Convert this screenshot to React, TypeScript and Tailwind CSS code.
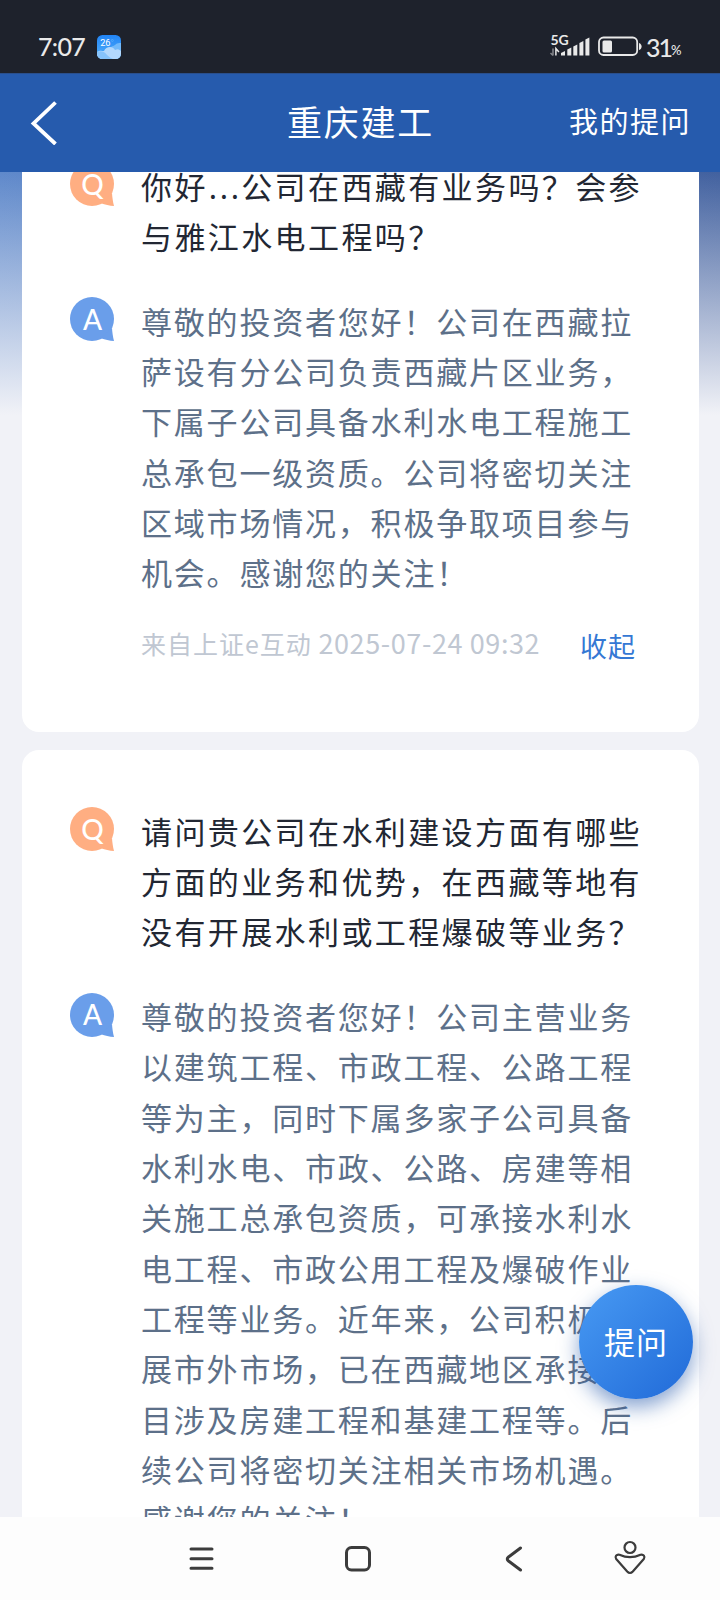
import React from "react"

interface QaItem {
    question: string[]
    answer: string[]
    source?: string
}

const items: QaItem[] = [
    {
        question: ["你好…公司在西藏有业务吗？会参", "与雅江水电工程吗？"],
        answer: [
            "尊敬的投资者您好！公司在西藏拉",
            "萨设有分公司负责西藏片区业务，",
            "下属子公司具备水利水电工程施工",
            "总承包一级资质。公司将密切关注",
            "区域市场情况，积极争取项目参与",
            "机会。感谢您的关注！",
        ],
        source: "2025-07-24 09:32",
    },
    {
        question: [
            "请问贵公司在水利建设方面有哪些",
            "方面的业务和优势，在西藏等地有",
            "没有开展水利或工程爆破等业务？",
        ],
        answer: [
            "尊敬的投资者您好！公司主营业务",
            "以建筑工程、市政工程、公路工程",
            "等为主，同时下属多家子公司具备",
            "水利水电、市政、公路、房建等相",
            "关施工总承包资质，可承接水利水",
            "电工程、市政公用工程及爆破作业",
            "工程等业务。近年来，公司积极拓",
            "展市外市场，已在西藏地区承接项",
            "目涉及房建工程和基建工程等。后",
            "续公司将密切关注相关市场机遇。",
            "感谢您的关注！",
        ],
    },
]

// the CJK ellipsis sits mid-line, so it is set as spaced full stops
const Lines: React.FC<{ lines: string[] }> = ({ lines }) => (
    <>
        {lines.map(line => (
            <span key={line} className="block h-[50.3px] whitespace-nowrap">
                {line.split(/(…)/).map((part, i) =>
                    part === "…" ? (
                        <span key={i} className="inline-block w-[33.4px] pl-px font-['Noto_Sans'] text-[31px] leading-none tracking-[2.7px]">
                            ...
                        </span>
                    ) : (
                        part
                    )
                )}
            </span>
        ))}
    </>
)

const Badge: React.FC<{ letter: "Q" | "A" }> = ({ letter }) => (
    <div className="relative h-11 w-11 shrink-0">
        <svg
            viewBox="0 0 44 44"
            className={letter === "Q" ? "h-11 w-11 text-[#ffae82]" : "h-11 w-11 text-[#6a9eea]"}
            fill="currentColor"
        >
            <circle cx="22" cy="22" r="22" />
            <path d="M42 31c.2 4 .9 8.500 2 13-4.500-.4-9-1.300-13-2.800z" />
        </svg>
        <span className="absolute inset-0 flex items-center justify-center pb-px pl-px font-['Lato'] text-[28px] leading-none font-medium text-white">
            {letter}
        </span>
    </div>
)

const StatusBar: React.FC = () => (
    <div className="flex h-[73px] shrink-0 items-end justify-between bg-[#1e222c] pr-[37px] pb-[11px] pl-[38px] font-['Lato'] text-[#e9e9e9]">
        <div className="flex items-center gap-3 pb-0.5">
            <span className="w-[47px] text-[25px] leading-[27px] font-medium tracking-[-0.7px] whitespace-nowrap">7:07</span>
            <svg viewBox="0 0 24 24" className="h-6 w-6">
                <defs>
                    <linearGradient id="sky" x1="0" y1="0" x2="0" y2="1">
                        <stop offset="0" stopColor="#2184f5" />
                        <stop offset="1" stopColor="#55b2fb" />
                    </linearGradient>
                    <clipPath id="tile">
                        <rect width="24" height="24" rx="5.500" />
                    </clipPath>
                </defs>
                <g clipPath="url(#tile)">
                    <rect width="24" height="24" fill="url(#sky)" />
                    <path d="M12 14c2-3 5-3 6-4 2-2 4-2 6-2v16H8z" fill="#72b9fa" />
                    <path d="M0 17c3-2 5-1 7-1 2-5 9-5 11-1 3-2 5 0 6 1v8H0z" fill="#b3d8fd" />
                    <path d="M0 17c4-2 8 0 10 3 2 2 4 3 6 4H0z" fill="#86c3fc" />
                </g>
                <text x="3.200" y="11" fontSize="9.200" fill="#fff" fontFamily="Roboto">26</text>
                <circle cx="15.300" cy="5.500" r="1" fill="none" stroke="#5fb0fb" strokeWidth=".7" />
            </svg>
        </div>

        <div className="flex items-center">
            <svg viewBox="0 0 96 24" className="mr-0.5 h-6 w-24 overflow-visible">
                <text x="1.500" y="10" fontSize="14" fontWeight="700" fill="#e9e9e9" fontFamily="Lato">5G</text>
                <path d="M4 13.500v7M4 20.500l-2.500-2.500" stroke="#85878c" strokeWidth="1.500" fill="none" />
                <path d="M6.900 20.500v-7l3 3.500" stroke="#e9e9e9" strokeWidth="1.500" fill="none" />
                <g fill="#e9e9e9">
                    <path d="M12 18l4-2v4.500h-4z" />
                    <path d="M18.300 14.500l4-2v8h-4z" />
                    <path d="M24.300 11.500l4-2v11h-4z" />
                    <path d="M30.400 8l4-2v14.500h-4z" />
                    <path d="M36.400 4.500l4-2v18h-4z" />
                    <rect x="53.500" y="5.500" width="9.500" height="12" rx="1.500" />
                    <path d="M90 8c3.500 1 3.500 6 0 7z" />
                </g>
                <rect x="50" y="2.500" width="38.200" height="17.500" rx="4.500" fill="none" stroke="#e9e9e9" strokeWidth="1.800" />
            </svg>
            <span className="w-6 -translate-x-px text-[25px] leading-6 font-medium tracking-[-2px]">31</span>
            <span className="w-3 pt-1.5 text-[13px] leading-6 font-medium">%</span>
        </div>
    </div>
)

const App: React.FC = () => {
    return (
        <div className="flex h-[1600px] w-[720px] flex-col overflow-hidden bg-[#f1f2f7] font-['Noto_Sans_CJK_SC',sans-serif]">
            <StatusBar />

            {/* HEADER */}
            <header className="grid h-[99px] shrink-0 grid-cols-[1fr_auto_1fr] items-center border-t border-[#2a4f8c] bg-[#265bad] pr-[29px] pl-[30px] text-white">
                <svg viewBox="0 0 28 44" className="h-11 w-7" fill="none" stroke="currentColor" strokeWidth="3.800">
                    <path d="M25.500 1.500L3.500 22.500l22 20.500" />
                </svg>
                <h1 className="pb-[5px] text-[35px] leading-none tracking-[1.8px]">重庆建工</h1>
                <button className="justify-self-end pb-[5px] text-[29px] leading-none tracking-[1.5px]">我的提问</button>
            </header>

            {/* Q&A LIST */}
            <main className="flex-1 overflow-hidden bg-[linear-gradient(to_bottom,transparent,#f1f2f7_243px),linear-gradient(to_right,#5f89cb,#42619f)] pr-[21px] pl-[22px]">
                <div className="-mt-[67px] flex flex-col gap-[18px]">
                    {items.map(item => (
                        <article key={item.question[0]} className="rounded-[17px] bg-white px-12 pt-[57px] last:pb-12">
                            <div className="flex gap-[27px]">
                                <Badge letter="Q" />
                                <p className="-mt-[1.5px] mb-[1.5px] text-[31px] leading-[50.3px] tracking-[2.4px] text-[#222733]">
                                    <Lines lines={item.question} />
                                </p>
                            </div>
                            <div className="mt-[34.7px] flex gap-[27px]">
                                <Badge letter="A" />
                                <p className="-mt-[1.5px] mb-[1.5px] text-[31px] leading-[50.3px] tracking-[1.8px] text-[#5d7089]">
                                    <Lines lines={item.answer} />
                                </p>
                            </div>
                            {item.source && (
                                <div className="flex h-[133px] items-start pt-6 pl-[71px]">
                                    <p className="w-[439px] text-[25px] leading-10 tracking-[1px] whitespace-nowrap text-[#c0c7d2]">
                                        来自上证e互动 <span className="text-[27px] leading-none tracking-[0.6px]">{item.source}</span>
                                    </p>
                                    <button className="pt-[3px] text-[27px] leading-10 tracking-[1px] text-[#3578d4]">收起</button>
                                </div>
                            )}
                        </article>
                    ))}
                </div>
            </main>

            {/* SYSTEM NAVIGATION */}
            <nav className="flex h-[83px] shrink-0 items-center bg-[#fdfdfd] text-[#3c3c3c]">
                <svg viewBox="0 0 720 83" className="h-[83px] w-[720px]" fill="none" stroke="currentColor" strokeWidth="3" strokeLinecap="round" strokeLinejoin="round">
                    <path d="M191 32h21M191 41.700h21M191 51.300h21" />
                    <rect x="346.500" y="30.500" width="23" height="22.500" rx="5" />
                    <path d="M520.500 31l-12 9q-2.500 2 0 4l12 9" />
                    <g strokeWidth="2.200">
                        <circle cx="630" cy="30.500" r="5.500" />
                        <path d="M619.500 37.700q10.500 5 21 0c3-.8 5 2 3.300 4.300l-11 12.500q-2.800 3-5.600 0l-11-12.500c-1.700-2.300.3-5.100 3.300-4.300z" />
                    </g>
                </svg>
            </nav>

            {/* ASK BUTTON */}
            <button className="absolute top-[1285px] left-[579px] h-[114px] w-[114px] rounded-full bg-linear-to-br from-[#489af3] to-[#216ad8] pb-[3px] text-[31px] leading-none tracking-[1px] text-white shadow-[0_8px_20px_rgba(32,85,170,0.55)]">
                提问
            </button>
        </div>
    )
}

export default App
